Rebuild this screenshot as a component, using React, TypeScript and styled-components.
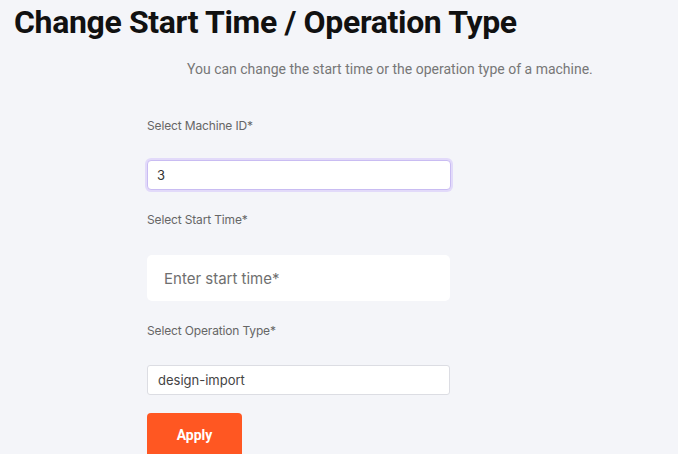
import React from "react";
import styled, { createGlobalStyle } from "styled-components";

const Global = createGlobalStyle`
  html, body { margin: 0; padding: 0; background: #f4f5f9; }
  body { font-family: Roboto, "Liberation Sans", sans-serif; }
  * { box-sizing: border-box; }
`;

const Page = styled.div`
  width: 678px;
  height: 454px;
  overflow: hidden;
  background: #f4f5f9;
  display: flex;
  flex-direction: column;
`;

const Title = styled.h1`
  margin: 0;
  padding: 3px 0 0 14px;
  font-family: Roboto, "Liberation Sans", sans-serif;
  font-weight: 700;
  font-size: 32px;
  line-height: 38px;
  color: #111;
  letter-spacing: -0.35px;
`;

const Subtitle = styled.p`
  margin: 19px 0 0 187px;
  font-family: Roboto, "Liberation Sans", sans-serif;
  font-size: 14px;
  line-height: 18px;
  color: #777;
`;

const Form = styled.form`
  margin: 40px 0 0 147px;
  width: 304px;
  display: flex;
  flex-direction: column;
`;

const Label = styled.label<{ $gap: number }>`
  display: block;
  font-family: Inter, "Noto Sans", sans-serif;
  font-size: 12px;
  line-height: 16px;
  color: #666;
  letter-spacing: -0.15px;
  margin-bottom: ${(p) => p.$gap}px;
`;

const Field = styled.div<{ $after: number }>`
  margin-bottom: ${(p) => p.$after}px;
`;

const FocusedInput = styled.input`
  display: block;
  width: 304px;
  height: 30px;
  padding: 0 9px;
  border: 1px solid #c9bcf2;
  box-shadow: 0 0 0 2px #e2dafa;
  border-radius: 4px;
  background: #fff;
  font-family: Inter, "Noto Sans", sans-serif;
  font-size: 13px;
  color: #333;
  outline: none;
`;

const BigInput = styled.input`
  display: block;
  width: 303px;
  height: 46px;
  padding: 0 17px;
  border: none;
  border-radius: 5px;
  background: #fff;
  font-family: Inter, "Noto Sans", sans-serif;
  font-size: 15px;
  color: #333;
  outline: none;
  &::placeholder { color: #6f6f6f; }
`;

const PlainInput = styled.input`
  display: block;
  width: 303px;
  height: 30px;
  padding: 0 10px;
  border: 1px solid #dcdde3;
  border-radius: 3px;
  background: #fff;
  font-family: Inter, "Noto Sans", sans-serif;
  font-size: 13px;
  color: #444;
  outline: none;
`;

const ApplyButton = styled.button`
  width: 95px;
  height: 44px;
  border: none;
  border-radius: 4px;
  background: #ff5722;
  color: #fff;
  font-family: Roboto, "Liberation Sans", sans-serif;
  font-weight: 700;
  font-size: 14px;
  cursor: pointer;
`;

export default function App() {
  return (
    <Page>
      <Global />
      <Title>Change Start Time / Operation Type</Title>
      <Subtitle>You can change the start time or the operation type of a machine.</Subtitle>
      <Form onSubmit={(e) => e.preventDefault()}>
        <Field $after={22}>
          <Label $gap={26}>Select Machine ID*</Label>
          <FocusedInput defaultValue="3" />
        </Field>
        <Field $after={22}>
          <Label $gap={27}>Select Start Time*</Label>
          <BigInput placeholder="Enter start time*" />
        </Field>
        <Field $after={18}>
          <Label $gap={26}>Select Operation Type*</Label>
          <PlainInput defaultValue="design-import" />
        </Field>
        <ApplyButton type="submit">Apply</ApplyButton>
      </Form>
    </Page>
  );
}
